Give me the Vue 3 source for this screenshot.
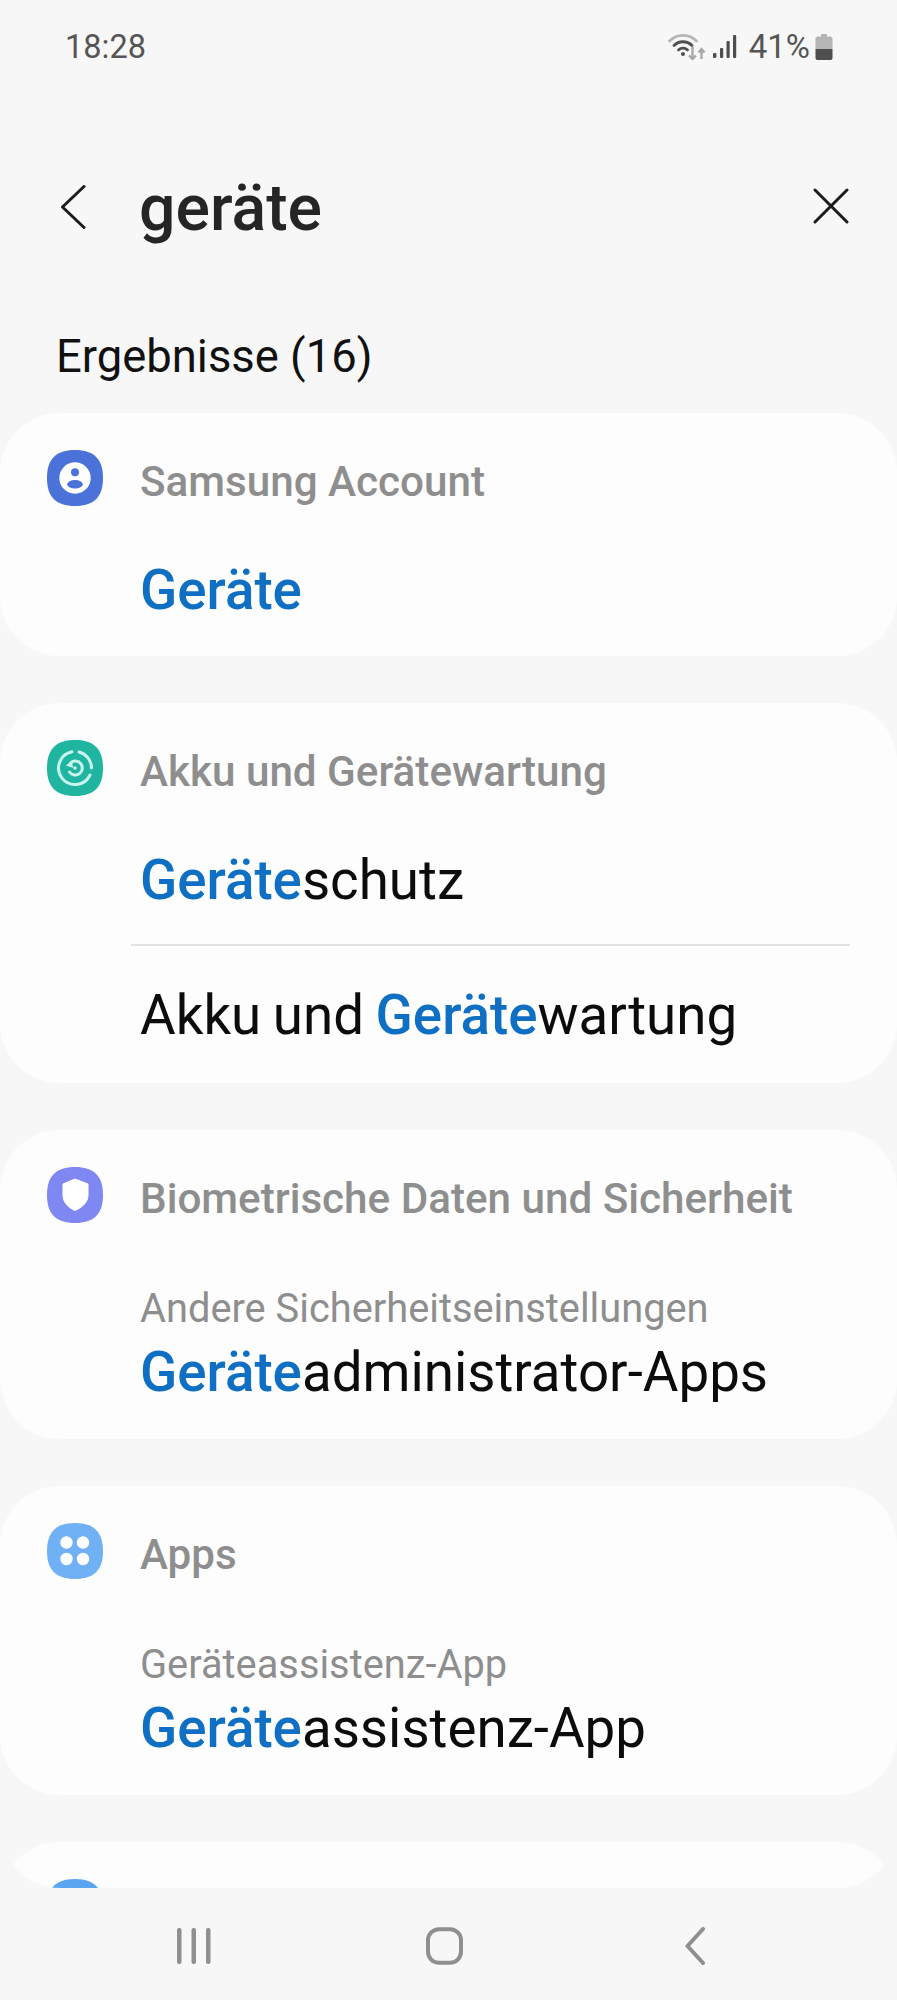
<script setup>
const cards = [
  { title: 'Samsung Account', icon: 'account', rows: [{ parts: [['Geräte', true]] }] },
  { title: 'Akku und Gerätewartung', icon: 'care', rows: [
    { parts: [['Geräte', true], ['schutz', false]] },
    { parts: [['Akku und ', false], ['Geräte', true], ['wartung', false]] }
  ] },
  { title: 'Biometrische Daten und Sicherheit', icon: 'shield', rows: [
    { sub: 'Andere Sicherheitseinstellungen', parts: [['Geräte', true], ['administrator-Apps', false]] }
  ] },
  { title: 'Apps', icon: 'apps', rows: [
    { sub: 'Geräteassistenz-App', parts: [['Geräte', true], ['assistenz-App', false]] }
  ] },
  { title: '', icon: 'blank', rows: [] }
]
const squircle = 'M28 0C47 0 56 9 56 28C56 47 47 56 28 56C9 56 0 47 0 28C0 9 9 0 28 0Z'
const iconColor = { account: '#4a72d9', care: '#1fb5a0', shield: '#7f88f2', apps: '#70b0f5', blank: '#5ba4f0' }
</script>

<template>
  <div class="screen">
    <div class="status">
      <span class="time">18:28</span>
      <div class="status-right">
        <svg class="wifi" width="38" height="28" viewBox="0 0 38 28" fill="none">
          <path d="M1.5 9C9 1.5 21 1.5 28.5 9" stroke="#b5b5b5" stroke-width="2.8" stroke-linecap="round"/>
          <path d="M6 13.5C11 8.5 19 8.5 24 13.5" stroke="#4e4e4e" stroke-width="2.8" stroke-linecap="round"/>
          <path d="M10.5 18C13 15.5 17 15.5 19.5 18" stroke="#4e4e4e" stroke-width="2.8" stroke-linecap="round"/>
          <circle cx="15" cy="22" r="2" fill="#4e4e4e"/>
          <path d="M24.5 15V27M21 23.5L24.5 27L28 23.5" stroke="#a8a8a8" stroke-width="2.4"/>
          <path d="M33.5 27V17M30.5 20.5L33.5 17L36.5 20.5" stroke="#a8a8a8" stroke-width="2.4"/>
        </svg>
        <svg class="signal" width="24" height="25" viewBox="0 0 24 25" fill="#4e4e4e">
          <rect x="0" y="19" width="3.4" height="5" rx="1.2"/>
          <rect x="7" y="14" width="3.2" height="10" rx="1"/>
          <rect x="13.5" y="7" width="3.2" height="17" rx="1"/>
          <rect x="20" y="1" width="3.2" height="23" rx="1"/>
        </svg>
        <span class="pct">41%</span>
        <svg class="battery" width="18" height="28" viewBox="0 0 18 28">
          <path d="M6 1H12V3.5H15C16.5 3.5 17.5 4.5 17.5 6V16H.5V6C.5 4.5 1.5 3.5 3 3.5H6Z" fill="#b5b5b5"/>
          <path d="M.5 16H17.5V25C17.5 26.5 16.5 27 15 27H3C1.5 27 .5 26.5 .5 25Z" fill="#4e4e4e"/>
        </svg>
      </div>
    </div>

    <div class="search">
      <svg class="back" width="26" height="44" viewBox="0 0 26 44" fill="none">
        <path d="M24 1.5L2.5 22L24 42.5" stroke="#1c1c1c" stroke-width="3" stroke-linecap="round" stroke-linejoin="round"/>
      </svg>
      <span class="query">geräte</span>
      <svg class="close" width="36" height="36" viewBox="0 0 36 36" fill="none">
        <path d="M2 2L34 34M34 2L2 34" stroke="#1c1c1c" stroke-width="3" stroke-linecap="round"/>
      </svg>
    </div>

    <div class="results">Ergebnisse (16)</div>

    <div class="list">
      <section v-for="(card, i) in cards" :key="i" class="card">
        <div class="head">
          <svg class="app-icon" width="56" height="56" viewBox="0 0 56 56">
            <path :d="squircle" :fill="iconColor[card.icon]"/>
            <template v-if="card.icon === 'account'">
              <circle cx="28" cy="28" r="15.7" fill="#fff"/>
              <circle cx="28" cy="22.3" r="4" fill="#4a72d9"/>
              <ellipse cx="28" cy="34.3" rx="7.8" ry="4.3" fill="#4a72d9"/>
            </template>
            <template v-else-if="card.icon === 'care'">
              <g fill="none" stroke="#c8f5ee" stroke-width="3" stroke-linecap="round">
                <path d="M25 11.8A16.5 16.5 0 1 0 43 35"/>
                <path d="M32 12A16.5 16.5 0 0 1 44.5 28"/>
                <path d="M23.5 23A7 7 0 1 1 22.5 32"/>
              </g>
              <path d="M19 25.5L25 20.5L26 28Z" fill="#c8f5ee"/>
              <circle cx="28" cy="28" r="1.8" fill="#c8f5ee"/>
            </template>
            <path v-else-if="card.icon === 'shield'" d="M28 12L41 17V28C41 36 34 41 28 43.5C22 41 16 36 16 28V17Z" fill="#fff" stroke="#fff" stroke-width="1" stroke-linejoin="round"/>
            <g v-else-if="card.icon === 'apps'" fill="#fff">
              <circle cx="19.5" cy="19.5" r="6.2"/>
              <circle cx="36" cy="19.5" r="6.2"/>
              <circle cx="19.5" cy="36" r="6.2"/>
              <circle cx="36" cy="36" r="6.2"/>
            </g>
          </svg>
          <span class="card-title">{{ card.title }}</span>
        </div>
        <div v-for="(row, j) in card.rows" :key="j" class="row" :class="{ stacked: row.sub, divided: j > 0 }">
          <div v-if="row.sub" class="sub">{{ row.sub }}</div>
          <div class="main">
            <span v-for="(p, k) in row.parts" :key="k" :class="{ hit: p[1] }">{{ p[0] }}</span>
          </div>
        </div>
      </section>
    </div>

    <nav class="nav">
      <svg width="34" height="38" viewBox="0 0 34 38" fill="#8f8f8f">
        <rect x="0" y="1" width="4.5" height="36" rx="2"/>
        <rect x="14.5" y="1" width="4.5" height="36" rx="2"/>
        <rect x="29" y="1" width="4.5" height="36" rx="2"/>
      </svg>
      <svg class="home" width="37" height="38" viewBox="0 0 37 38" fill="none">
        <rect x="2" y="2.2" width="33" height="33.6" rx="11" stroke="#8f8f8f" stroke-width="4"/>
      </svg>
      <svg width="20" height="38" viewBox="0 0 20 38" fill="none">
        <path d="M18 2L2.5 19L18 36" stroke="#8f8f8f" stroke-width="4" stroke-linecap="round" stroke-linejoin="round"/>
      </svg>
    </nav>
  </div>
</template>

<style>
html, body { margin: 0; background: #f7f7f7; }
</style>

<style scoped>
.screen {
  width: 897px;
  height: 2000px;
  background: #f7f7f7;
  font-family: Roboto, "Liberation Sans", sans-serif;
  overflow: hidden;
  display: flex;
  flex-direction: column;
}
.status {
  height: 92px;
  box-sizing: border-box;
  padding: 27px 64px 0 65px;
  display: flex;
  justify-content: space-between;
  color: #555;
}
.time { font-size: 32.5px; line-height: 40px; }
.status-right { display: flex; align-items: flex-start; height: 40px; }
.wifi { margin-top: 5px; margin-right: 7px; }
.signal { margin-top: 7px; margin-right: 12px; }
.pct { font-size: 33px; line-height: 40px; margin-right: 5px; }
.battery { margin-top: 6px; }
.search {
  height: 130px;
  margin-top: 50px;
  box-sizing: border-box;
  display: flex;
  align-items: center;
  padding: 0 48px 0 60px;
}
.query {
  flex: 1;
  margin-left: 53px;
  margin-top: 2px;
  font-size: 64.3px;
  font-weight: 500;
  color: #252525;
}
.close { margin-top: -2px; }
.results {
  margin-top: 55px;
  padding-left: 56px;
  font-size: 45.4px;
  line-height: 60px;
  color: #111;
}
.list {
  margin-top: 26px;
  height: 1475px;
  flex: none;
  overflow: hidden;
  border-radius: 0 0 60px 60px;
  display: flex;
  flex-direction: column;
  gap: 47px;
}
.card {
  background: #fdfdfd;
  border-radius: 60px;
  flex: none;
}
.head {
  height: 121px;
  box-sizing: border-box;
  padding: 37px 0 0 47px;
  display: flex;
  align-items: flex-start;
}
.app-icon { flex: none; }
.card-title {
  margin-left: 37px;
  margin-top: 4px;
  font-size: 42.2px;
  line-height: 56px;
  font-weight: 500;
  color: #8e8e8e;
}
.row {
  height: 122px;
  margin: 0 47px 0 131px;
  display: flex;
  flex-direction: column;
  justify-content: center;
  padding-bottom: 11px;
  box-sizing: border-box;
}
.row.divided {
  height: 139px;
  border-top: 2px solid #e2e2e2;
  margin-top: -2px;
  padding-bottom: 0;
  padding-top: 1px;
  word-spacing: -2px;
}
.row.stacked {
  height: 188px;
  justify-content: flex-start;
  padding-bottom: 0;
}
.main {
  margin-left: 9px;
  font-size: 54.7px;
  line-height: 70px;
  color: #0c0c0c;
  white-space: nowrap;
}
.sub {
  margin-left: 9px;
  margin-top: 30px;
  font-size: 39.8px;
  line-height: 56px;
  color: #8e8e8e;
}
.hit { color: #0f6fc2; font-weight: 500; }
.nav {
  flex: 1;
  display: flex;
  align-items: center;
  justify-content: space-between;
  padding: 4px 192px 0 177px;
}
.home { margin-right: 7px; }
</style>
